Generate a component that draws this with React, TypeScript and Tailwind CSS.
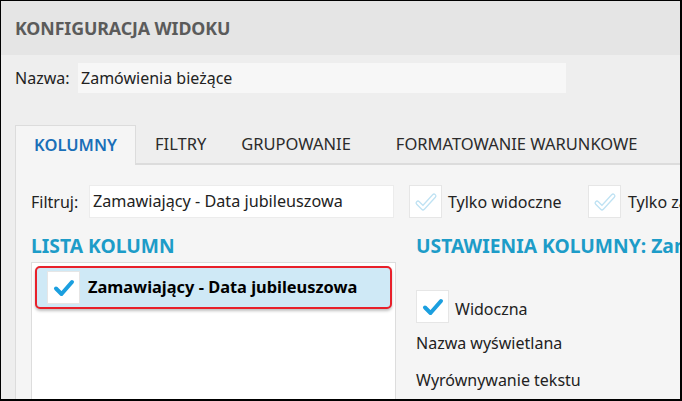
import React from 'react';

const font = { fontFamily: '"Noto Sans", "Open Sans", sans-serif' };

// solid blue tick used for checked boxes
const SolidCheck = () => (
  <svg width="22" height="20" viewBox="0 0 22 20">
    <path d="M3 10.5 L8.5 16 L19 4" fill="none" stroke="#1b9fdf" strokeWidth="4" strokeLinecap="round" strokeLinejoin="round" />
  </svg>
);

// pale outlined tick used for unchecked toggles
const HollowCheck = () => (
  <svg width="24" height="20" viewBox="0 0 24 20">
    <path d="M4 11 L9 16 L20 4" fill="none" stroke="#bfe2f3" strokeWidth="5" strokeLinecap="round" strokeLinejoin="round" />
    <path d="M4 11 L9 16 L20 4" fill="none" stroke="#ffffff" strokeWidth="2.4" strokeLinecap="round" strokeLinejoin="round" />
  </svg>
);

const CheckBox = ({ checked }: { checked: boolean }) => (
  <div className="w-[33px] h-[33px] bg-white border border-[#e6e6e6] flex items-center justify-center shrink-0">
    {checked ? <SolidCheck /> : <HollowCheck />}
  </div>
);

export default function App() {
  return (
    <div
      className="w-[682px] h-[401px] overflow-hidden border-l border-t border-r-2 border-b-2 border-black flex flex-col bg-[#eeeeee]"
      style={font}
    >
      {/* Header */}
      <div className="h-[54px] shrink-0 bg-[#e5e5e5] flex items-center pl-[14px]">
        <span className="text-[17.8px] font-bold text-[#5b5b5b] tracking-[-0.1px]">KONFIGURACJA WIDOKU</span>
      </div>

      {/* Name row */}
      <div className="h-[30px] mt-[8px] flex items-center pl-[14px] text-[16px] text-[#222] whitespace-nowrap">
        <span className="w-[63px] shrink-0">Nazwa:</span>
        <div className="w-[488px] h-[30px] shrink-0 bg-[#f7f7f7] flex items-center pl-[3px]">Zamówienia bieżące</div>
      </div>

      {/* Tabs */}
      <div className="mt-[32px] ml-[14px] flex items-end h-[40px] border-b-2 border-[#dcdcdc] text-[16.5px] whitespace-nowrap">
        <div className="w-[121px] h-[40px] -mb-[2px] shrink-0 bg-[#f5f5f5] border-l border-t border-r border-[#dcdcdc] flex items-center justify-center font-semibold text-[#1a6fb8]">
          KOLUMNY
        </div>
        <div className="h-full flex items-center ml-[19px] text-[#2b2b2b]">FILTRY</div>
        <div className="h-full flex items-center ml-[35px] text-[#2b2b2b]">GRUPOWANIE</div>
        <div className="h-full flex items-center ml-[45px] text-[#2b2b2b]">FORMATOWANIE WARUNKOWE</div>
      </div>

      {/* Panel */}
      <div className="flex-1 ml-[14px] bg-[#f5f5f5] border-l border-[#dcdcdc] pl-[15px] flex flex-col overflow-hidden">
        <div className="mt-[20px] h-[33px] flex items-center text-[16px] text-[#222] whitespace-nowrap">
          <span className="w-[58px] shrink-0">Filtruj:</span>
          <div className="w-[305px] h-[33px] shrink-0 bg-white border border-[#ececec] flex items-center pl-[3px] text-[16.2px]">
            Zamawiający - Data jubileuszowa
          </div>
          <div className="ml-[15px] shrink-0"><CheckBox checked={false} /></div>
          <span className="ml-[6px] w-[140px] shrink-0">Tylko widoczne</span>
          <CheckBox checked={false} />
          <span className="ml-[7px] shrink-0">Tylko zaznaczone</span>
        </div>

        <div className="mt-[14px] flex flex-1 min-h-0">
          {/* Column list */}
          <div className="w-[365px] shrink-0 flex flex-col">
            <div className="h-[28px] flex items-center text-[19.3px] font-bold text-[#1d9cc8]">LISTA KOLUMN</div>
            <div className="mt-[2px] flex-1 bg-white border-l border-t border-r border-[#dddddd] p-[3px]">
              <div className="h-[43px] rounded-[5px] border-2 border-[#e8202a] bg-[#cfe9f6] shadow-[0_2px_3px_rgba(0,0,0,0.25)] flex items-center pl-[10px]">
                <CheckBox checked={true} />
                <span className="ml-[8px] text-[16.4px] font-bold text-black whitespace-nowrap">Zamawiający - Data jubileuszowa</span>
              </div>
            </div>
          </div>

          {/* Column settings */}
          <div className="ml-[20px] flex flex-col whitespace-nowrap shrink-0">
            <div className="h-[28px] flex items-center text-[19.3px] font-bold text-[#1d9cc8]">USTAWIENIA KOLUMNY: Zamawiający</div>
            <div className="mt-[30px] flex items-center text-[16px] text-[#222]">
              <CheckBox checked={true} />
              <span className="ml-[6px] mt-[4px]">Widoczna</span>
            </div>
            <div className="mt-[8px] text-[16px] text-[#222]">Nazwa wyświetlana</div>
            <div className="mt-[13px] text-[16px] text-[#222]">Wyrównywanie tekstu</div>
          </div>
        </div>
      </div>
    </div>
  );
}
